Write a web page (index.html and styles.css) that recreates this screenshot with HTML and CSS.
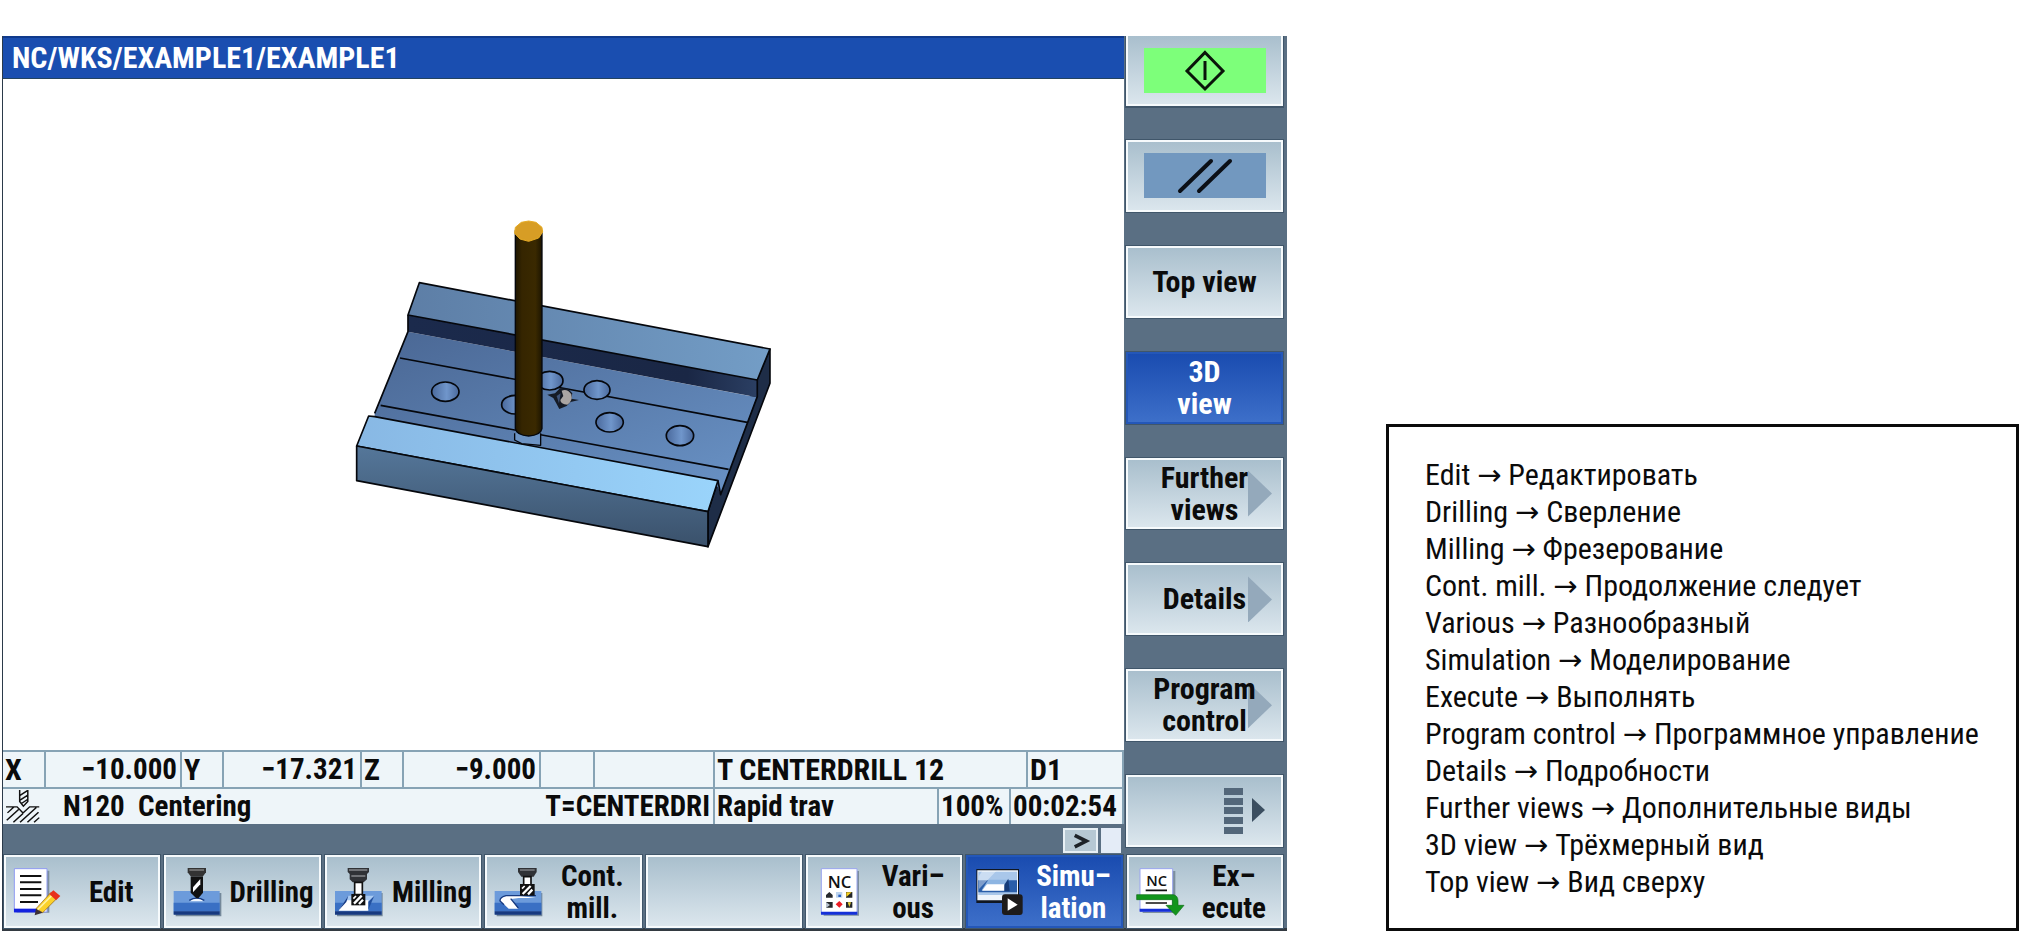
FILE: index.html
```html
<!DOCTYPE html>
<html lang="en">
<head>
<meta charset="utf-8">
<title>NC/WKS/EXAMPLE1/EXAMPLE1</title>
<link rel="stylesheet" href="styles.css">
</head>
<body>
<main class="page">
  <section class="machine">
    <div class="upper">
      <div class="screen">
        <h1 class="title">NC/WKS/EXAMPLE1/EXAMPLE1</h1>
        <svg class="view" viewBox="0 0 1121 671" role="img" aria-label="3D simulation of the workpiece">
          <defs>
            <linearGradient id="back" x1="0" y1="0" x2="1" y2="0"><stop offset="0" stop-color="#5d7ea6"/><stop offset="1" stop-color="#739dc6"/></linearGradient>
            <linearGradient id="floor" x1="0" y1="0" x2="1" y2="1"><stop offset="0" stop-color="#4a6794"/><stop offset="1" stop-color="#6a93c6"/></linearGradient>
            <linearGradient id="lip" x1="0" y1="0" x2="1" y2="0"><stop offset="0" stop-color="#88b8e4"/><stop offset="1" stop-color="#9ad4fb"/></linearGradient>
            <linearGradient id="front" x1="0" y1="0" x2="0" y2="1"><stop offset="0" stop-color="#55779a"/><stop offset="1" stop-color="#3a516b"/></linearGradient>
            <linearGradient id="wall" x1="0" y1="0" x2="1" y2="0"><stop offset="0" stop-color="#1b2a4c"/><stop offset=".8" stop-color="#1a2745"/><stop offset="1" stop-color="#2b3f63"/></linearGradient>
            <linearGradient id="hole" x1="0" y1="0" x2="1" y2="0"><stop offset="0" stop-color="#4a699c"/><stop offset=".55" stop-color="#7096cb"/><stop offset="1" stop-color="#4a699c"/></linearGradient>
            <linearGradient id="rod" x1="0" y1="0" x2="1" y2="0"><stop offset="0" stop-color="#1d1500"/><stop offset=".25" stop-color="#352500"/><stop offset=".75" stop-color="#3a2900"/><stop offset="1" stop-color="#1d1500"/></linearGradient>
          </defs>
          <g transform="translate(337 121) scale(.3333)" stroke="#05070c" stroke-width="5" stroke-linejoin="round">
            <path d="M1290 447V550L1104 1040V935L1134 842 1250 540z" fill="#1e2d47"/>
            <path d="M204 395L1250 592 1142 884 1134 860 104 660V640z" fill="url(#floor)" stroke="none"/>
            <path d="M204 345L1252 540V592L204 395z" fill="url(#wall)" stroke="none"/>
            <path d="M238 248L1290 447 1252 540 204 345z" fill="url(#back)"/>
            <path d="M204 345V395L104 640M1252 540V590L1142 884L1134 842M180 474L1222 667M122 616L1166 808" fill="none"/>
            <path d="M86 648L104 650 1134 842 1104 935 50 738z" fill="url(#lip)"/>
            <path d="M50 738L1104 935V1040L50 842z" fill="url(#front)"/>
            <g fill="url(#hole)" stroke-width="5">
              <ellipse cx="316" cy="575" rx="41" ry="29"/>
              <ellipse cx="526" cy="614" rx="41" ry="28"/>
              <ellipse cx="629" cy="542" rx="40" ry="28"/>
              <ellipse cx="771" cy="570" rx="39" ry="28"/>
              <ellipse cx="809" cy="667" rx="41" ry="29"/>
              <ellipse cx="1020" cy="707" rx="41" ry="30"/>
            </g>
            <path d="M524 700V720L545 731 602 736V700" fill="#6d94c4" stroke-width="4"/>
            <path d="M526 92V686Q530 706 566 708Q602 706 606 686V92z" fill="url(#rod)" stroke-width="4"/>
            <path d="M544 67L566 63 588 67 606 82 608 96 596 114 566 124 540 117 524 100 526 82z" fill="#d79d25" stroke="#e7ac25" stroke-width="3"/>
            <path d="M622 584L645 580 660 565 684 566 697 580 694 596 717 600 692 606 680 618 658 627 648 608 640 594z" fill="#151b26" stroke="none"/>
            <path d="M665 572Q682 565 694 583Q699 604 682 614Q662 613 661 600L670 588z" fill="#aaa5a3" stroke="none"/>
            <path d="M650 588l12-8-5 30z" fill="#3e5378" stroke="none"/>
          </g>
        </svg>
        <div class="row axes">
          <span>X</span><span class="num">−10.000</span><span>Y</span><span class="num">−17.321</span><span>Z</span><span class="num">−9.000</span><span></span><span></span><span>T CENTERDRILL 12</span><span>D1</span>
        </div>
        <div class="row status">
          <span class="block">
            <svg class="drillmark" viewBox="18 150 92 98" preserveAspectRatio="none" fill="none" stroke="#111" stroke-width="4">
              <path d="M55 150V184L65 198 77 184V150M56 166l20-14M56 180l20-14M60 190l16-12M18 200H48L64 218 82 200H108M22 218l18-18M20 240l32-32M38 246l26-26M56 246l44-44M76 246l30-30M94 246l14-14"/>
            </svg>
            N120&nbsp; Centering<span class="tool">T=CENTERDRI</span>
          </span>
          <span>Rapid trav</span><span>100%</span><span>00:02:54</span>
        </div>
        <div class="strip">
          <button class="more" aria-label="Next menu"><svg viewBox="0 0 35 25"><path d="M11 6L24 12.500 11 19" fill="none" stroke="#1d2227" stroke-width="4"/></svg></button>
          <span class="slot"></span>
        </div>
      </div>
      <nav class="side" aria-label="Vertical softkeys">
        <button class="key first" aria-label="Start"><svg class="swatch start" viewBox="0 0 122 45"><path d="M61 4.500L79 23 61 41 43 23zM61 13V32" fill="none" stroke="#0a140a" stroke-width="3"/></svg></button>
        <button class="key" aria-label="Reset"><svg class="swatch reset" viewBox="0 0 122 45"><path d="M36 38L67 8M55 38L86 8" stroke="#0b0f16" stroke-width="4" stroke-linecap="round"/></svg></button>
        <button class="key">Top view</button>
        <button class="key active">3D<br>view</button>
        <button class="key next">Further<br>views</button>
        <button class="key next">Details</button>
        <button class="key next">Program<br>control</button>
        <button class="key pager" aria-label="More softkeys"><svg viewBox="0 0 42 46"><path d="M0 0h19v7H0zM0 10h19v7H0zM0 19h19v7H0zM0 29h19v7H0zM0 39h19v7H0z" fill="#53677a"/><path d="M28 10L41 22 28 34z" fill="#3b4e60"/></svg></button>
      </nav>
    </div>
    <nav class="bottom" aria-label="Horizontal softkeys">
      <button class="key">
        <svg class="icon" viewBox="36 44 150 156">
          <path d="M50 58h98v126H50z" fill="#7d8f9e"/><path d="M43 52h98v130H43z" fill="#fff" stroke="#8f9bf2" stroke-width="3"/><path d="M42 172h72v11H42z" fill="#1322e0"/>
          <path d="M60 74h64M60 93h64M60 113h64M60 132h64M60 152h54" stroke="#111" stroke-width="6"/>
          <path d="M108 172L152 124 172 140 128 184z" fill="#fbd12a" stroke="#8b5b10" stroke-width="2"/><path d="M112 176L158 130" stroke="#fff3a0" stroke-width="5"/><path d="M148 128L160 117 181 134 168 147z" fill="#e8301c"/><path d="M108 172L128 184 104 192z" fill="#3b3036"/>
        </svg><span>Edit</span></button>
      <button class="key">
        <svg class="icon" viewBox="519 44 150 156">
          <path d="M530 125h137v70H530z" fill="#74889a"/><path d="M524 119h138v70H524z" fill="#6c9bdb"/><path d="M524 154h138v26H524z" fill="#3a70c4"/><path d="M524 180h138v10H524z" fill="#17397f"/>
          <path d="M572 150Q593 130 614 150Z" fill="#eef6ff"/><path d="M571 147Q593 134 616 147" fill="none" stroke="#173a80" stroke-width="4"/>
          <path d="M566 50h55v13l-10 13H576l-10-13z" fill="#333"/><path d="M571 56h44" stroke="#888" stroke-width="4"/><path d="M575 76h37v48l-14 17h-6l-17-17z" fill="#111"/><path d="M582 108l22-25v16l-22 24z" fill="#fff"/>
        </svg><span>Drilling</span></button>
      <button class="key">
        <svg class="icon" viewBox="40 44 150 156">
          <path d="M52 125h137v70H52z" fill="#74889a"/><path d="M46 119h140v70H46z" fill="#6c9bdb"/><path d="M46 154h140v26H46z" fill="#3a70c4"/><path d="M46 180h140v10H46z" fill="#17397f"/>
          <path d="M86 133h78l-22 44H57z" fill="#a9caf2"/><path d="M80 147h66v31H57z" fill="#fff"/><path d="M86 133L57 177 80 152z" fill="#143985"/><path d="M164 133l-18 18v24z" fill="#214f9e"/>
          <path d="M84 50h64v12l-6 6v16l-10 9h-33l-9-9V68l-6-6z" fill="#303236"/><path d="M88 56h55M95 74h42" stroke="#85888c" stroke-width="4"/><path d="M105 93h23v37h-23z" fill="#fff" stroke="#111" stroke-width="5"/><path d="M95 128h42v34H95z" fill="#111"/><path d="M103 157l23-24M118 158l12-13" stroke="#fff" stroke-width="7"/><path d="M101 142l8-8" stroke="#fff" stroke-width="5"/>
        </svg><span>Milling</span></button>
      <button class="key">
        <svg class="icon" viewBox="523 44 150 156">
          <path d="M534 125h137v70H534z" fill="#74889a"/><path d="M528 119h140v70H528z" fill="#6c9bdb"/><path d="M528 154h140v26H528z" fill="#3a70c4"/><path d="M528 180h140v10H528z" fill="#17397f"/>
          <path d="M606 134H562Q545 138 545 148L570 172h29L578 143l22-3h52" fill="#fff"/><path d="M652 133H562Q543 138 544 149L556 160M576 142L599 170" fill="none" stroke="#173a80" stroke-width="4"/>
          <path d="M598 50h56v12l-9 14h-37l-10-14z" fill="#303236"/><path d="M604 56h44" stroke="#85888c" stroke-width="4"/><path d="M615 76h22v26h-22z" fill="#fff" stroke="#111" stroke-width="5"/><path d="M604 98h44v35h-44z" fill="#111"/><path d="M612 128l24-24M628 129l13-14" stroke="#fff" stroke-width="7"/><path d="M610 112l8-8" stroke="#fff" stroke-width="5"/>
        </svg><span>Cont.<br>mill.</span></button>
      <button class="key" aria-label="Empty softkey"></button>
      <button class="key">
        <svg class="icon" viewBox="45 135 150 156">
          <path d="M74 150h106v134H74z" fill="#7d8f9e"/><path d="M67 143h107v135H67z" fill="#fff" stroke="#9aa5ef" stroke-width="3"/><path d="M66 272h109v9H66z" fill="#1530d8"/>
          <text class="nc" x="86" y="200" font-size="50">NC</text>
          <path d="M81 230V222l10-9 10 9v8zM81 243h20v17H81zM141 213h19v17h-19zM141 243h19v17h-19z" fill="#26282c"/><path d="M81 243l12 9-12 9z" fill="#b9c2cf"/><path d="M111 213h19v17h-19z" fill="#bcd3ee"/><path d="M118 221h8v7h-8z" fill="#2962c4"/><path d="M142 214h16l-16 14z" fill="#f6cf20"/><path d="M146 244h10l-5 14z" fill="#e8d030"/><path d="M121 240l10 10-10 10-11-10z" fill="#ec1c24"/>
        </svg><span>Vari–<br>ous</span></button>
      <button class="key active">
        <svg class="icon" viewBox="527 135 150 156">
          <path d="M534 144h128v102H534z" fill="#101722"/><path d="M537 148h122v90H537z" fill="#eef4fb"/><path d="M540 152h116v70H540z" fill="#a9c7ea"/><path d="M540 178h116v36H540z" fill="#2a5ea9"/><path d="M570 176h60l-18 32h-62z" fill="#8db5e2"/><path d="M566 190h53v19h-68z" fill="#fff"/><path d="M630 173l-12 18v20h16z" fill="#153b78"/><path d="M552 150h42l-52 54v-40z" fill="#fff" opacity=".4"/>
          <rect x="611" y="220" width="62" height="62" rx="9" fill="#1d1b1b"/><path d="M628 232V269L658 251z" fill="#fff"/>
        </svg><span>Simu–<br>lation</span></button>
      <button class="key">
        <svg class="icon" viewBox="1010 135 150 156">
          <path d="M1033 150h98v126h-98z" fill="#7d8f9e"/><path d="M1025 143h98v128h-98z" fill="#fff" stroke="#9aa5ef" stroke-width="3"/><path d="M1024 263h100v9h-100z" fill="#1530d8"/>
          <text class="nc" x="1044" y="195" font-size="44">NC</text><path d="M1042 208h64M1042 246h64" stroke="#111" stroke-width="5"/>
          <path d="M1015 221H1125Q1139 224 1139 240V253H1157L1132 283 1103 253H1122V236H1015z" fill="#12951c" stroke="#0c6d14" stroke-width="2"/>
        </svg><span>Ex–<br>ecute</span></button>
    </nav>
  </section>
  <aside class="glossary">
    <ul>
      <li>Edit <i>→</i> Редактировать</li>
      <li>Drilling <i>→</i> Сверление</li>
      <li>Milling <i>→</i> Фрезерование</li>
      <li>Cont. mill. <i>→</i> Продолжение следует</li>
      <li>Various <i>→</i> Разнообразный</li>
      <li>Simulation <i>→</i> Моделирование</li>
      <li>Execute <i>→</i> Выполнять</li>
      <li>Program control <i>→</i> Программное управление</li>
      <li>Details <i>→</i> Подробности</li>
      <li>Further views <i>→</i> Дополнительные виды</li>
      <li>3D view <i>→</i> Трёхмерный вид</li>
      <li>Top view <i>→</i> Вид сверху</li>
    </ul>
  </aside>
</main>
</body>
</html>
```
FILE: styles.css
```css
* { box-sizing: border-box; }

body {
  margin: 0;
  background: #fff;
  color: #0b0b0b;
  font-family: "Roboto Condensed", "Liberation Sans Narrow", "Liberation Sans", sans-serif;
}

.page {
  display: grid;
  grid-template-columns: minmax(0, 1285fr) minmax(0, 633fr);
  column-gap: 99px;
  align-items: end;
  padding: 36px 1px 4px 2px;
}

.machine {
  background: #5a6f83;
  border-left: 1px solid #2b3a4a;
  border-bottom: 3px solid #333a41;
  font-size: 30px;
  font-weight: 700;
}

.upper {
  display: grid;
  grid-template-columns: minmax(0, 1121fr) minmax(0, 163fr);
}

.screen { display: flex; flex-direction: column; }

.title {
  margin: 0;
  padding-left: 9px;
  background: #1a4eb0;
  border-top: 2px solid #103a8c;
  border-bottom: 1px solid #24435f;
  color: #fff;
  font-size: 30px;
  line-height: 40px;
}

.view { display: block; width: 100%; background: #fff; }

.row {
  display: grid;
  border-top: 2px solid #87a3b5;
  background: #eef5f9;
  line-height: 35px;
  white-space: nowrap;
}
.row > span { padding-left: 2px; border-right: 2px solid #87a3b5; min-width: 0; height: 35px; }
.row .num { padding-right: 3px; text-align: right; font-size: 29px; }
.axes { grid-template-columns: 43fr 136fr 42fr 138fr 42fr 137fr 54fr 120fr 313fr 96fr; }
.status { grid-template-columns: 712fr 224fr 72fr 113fr; font-size: 29px; }
.status .block { display: flex; align-items: center; gap: 23px; padding: 0 3px; }
.tool { margin-left: auto; }
.drillmark { width: 34px; height: 33px; }

.strip { display: flex; justify-content: flex-end; gap: 3px; padding: 4px 3px 2px; }
.more {
  width: 35px;
  height: 25px;
  padding: 0;
  border: 2px solid #e8f0f5;
  background: #b6c8d3;
}
.more svg { display: block; width: 100%; }
.slot { width: 20px; height: 25px; background: #e4ecf7; }

.side {
  display: flex;
  flex-direction: column;
  gap: 34px;
  padding: 0 4px 8px 2px;
}
.key {
  display: flex;
  align-items: center;
  justify-content: center;
  min-width: 0;
  padding: 0;
  border: 2px solid #f6fafc;
  background: linear-gradient(#a9bfcd, #dbe6ed);
  box-shadow: 0 0 0 1px #40566a;
  color: #0b0b0b;
  font: inherit;
  line-height: 32px;
  text-align: center;
}
.side .key { flex: 1; }
.side .first { flex: 0 0 70px; border-top: 0; box-shadow: 0 1px 0 1px #40566a; }
.key.active {
  border-color: #2457b8;
  background: linear-gradient(#1a4cb0, #3d6fc9);
  color: #fff;
}
.swatch { width: 122px; height: 45px; }
.start { background: #7dff7a; }
.reset { background: #7298bf; }
.next { position: relative; z-index: 0; }
.next::after {
  content: "";
  position: absolute;
  z-index: -1;
  right: 9px;
  top: 11px;
  width: 24px;
  height: 46px;
  background: #94a9bb;
  clip-path: polygon(0 0, 100% 50%, 0 100%);
}
.pager { justify-content: flex-end; padding-right: 15px; }
.pager svg { width: 42px; height: 46px; }

.bottom {
  display: grid;
  grid-template-columns: repeat(8, minmax(0, 1fr));
  gap: 4px;
  padding: 0 4px 0 1px;
}
.bottom .key { height: 73px; justify-content: flex-start; font-size: 29px; }
.bottom .key span { flex: 1; }
.icon { flex: none; width: 50px; height: 52px; margin: 0 2px 0 6px; }
.nc { font-family: "Open Sans", sans-serif; font-weight: 600; fill: #111; }

.glossary { border: 3px solid #0b0b0b; padding: 29px 0 28px 36px; }
.glossary ul {
  margin: 0;
  padding: 0;
  list-style: none;
  font-size: 30px;
  line-height: 37px;
  white-space: nowrap;
}
.glossary i { font-family: "Noto Sans", "DejaVu Sans", sans-serif; font-size: 29px; font-style: normal; line-height: 0; }
```
